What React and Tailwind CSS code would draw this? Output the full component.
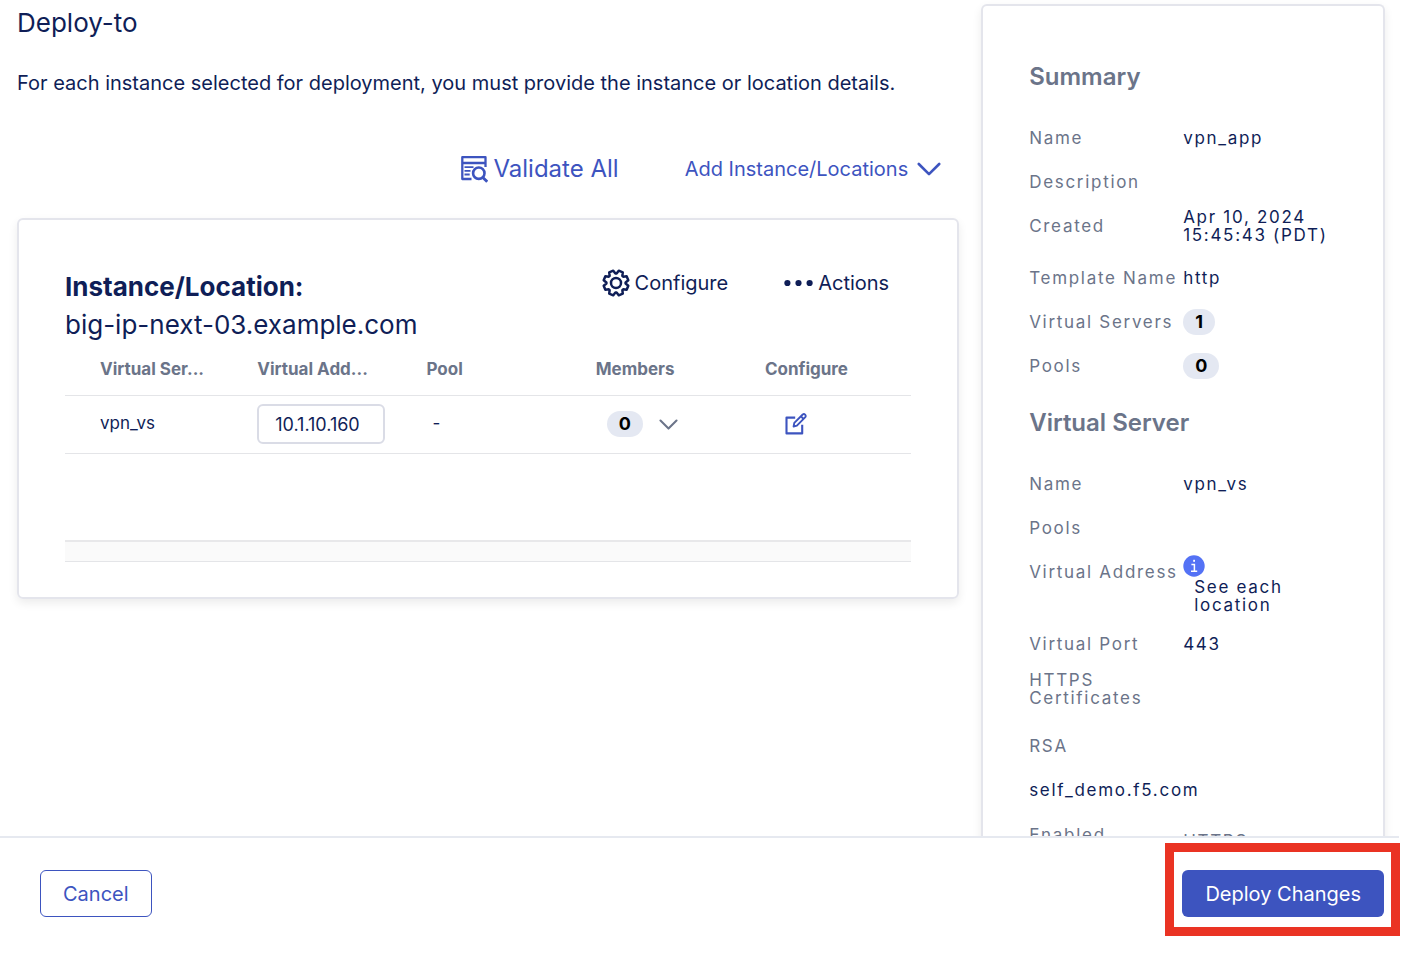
import React from "react";

const GEAR = (() => {
  const pts = [];
  for (let k = 0; k < 8; k++) {
    const c = 22.5 + k * 45;
    [[-19, 9.6], [-10, 12.6], [10, 12.6], [19, 9.6]].forEach(([d, r]) => {
      const a = ((c + d) * Math.PI) / 180;
      pts.push(`${(14 + r * Math.cos(a)).toFixed(2)} ${(14 + r * Math.sin(a)).toFixed(2)}`);
    });
  }
  return `M${pts.join("L")}Z`;
})();

function GearIcon() {
  return (
    <svg width="28" height="28" viewBox="0 0 28 28" fill="none" stroke="currentColor" strokeWidth="2.5" strokeLinejoin="round" aria-hidden="true">
      <path d={GEAR} />
      <circle cx="14" cy="14" r="5" />
    </svg>
  );
}

function ValidateIcon() {
  return (
    <svg width="28" height="28" viewBox="0 0 28 28" fill="none" stroke="currentColor" strokeWidth="2.3" strokeLinejoin="round" aria-hidden="true">
      <path d="M11.5 24H2.3V2.2h23.2V12M2.3 8h23.2" />
      <path d="M4.5 12.2h9M4.5 15.8h6M4.5 19.5h5.2" strokeWidth="1.8" />
      <circle cx="18.8" cy="18.2" r="5.7" strokeWidth="2.6" />
      <path d="M22.6 22.2l4.6 4.6" strokeWidth="2.8" />
    </svg>
  );
}

function Chevron({ className, strokeWidth }) {
  return (
    <svg className={className} viewBox="0 0 24 14" fill="none" stroke="currentColor" strokeWidth={strokeWidth} strokeLinecap="round" strokeLinejoin="round" aria-hidden="true">
      <path d="M1.8 2L12 12.2 22.2 2" />
    </svg>
  );
}

function DotsIcon() {
  return (
    <svg width="29" height="8" viewBox="0 0 29 8" fill="currentColor" aria-hidden="true">
      <circle cx="3.4" cy="4" r="3.1" />
      <circle cx="14.5" cy="4" r="3.1" />
      <circle cx="25.6" cy="4" r="3.1" />
    </svg>
  );
}

function EditIcon() {
  return (
    <svg width="22" height="22" viewBox="0 0 22 22" fill="none" stroke="currentColor" strokeWidth="2.1" strokeLinejoin="round" aria-hidden="true">
      <path d="M10.2 4.6H1.5v15.8h15.7v-8.6" />
      <path d="M8.6 13.5l.7-3.6 8.4-8.4q1.3-.9 2.4.2t.2 2.4l-8.4 8.6zM16 3.4l2.6 2.6" strokeWidth="1.9" />
    </svg>
  );
}

function InfoIcon() {
  return (
    <svg width="22" height="22" viewBox="0 0 22 22" aria-hidden="true">
      <circle cx="11" cy="11" r="10.7" fill="#5472f5" />
      <g fill="none" stroke="#fff" strokeWidth="1.5">
        <path d="M8.4 9.4h3v6.8M8 16.2h6.2" />
      </g>
      <rect x="10.2" y="4.8" width="1.8" height="2" fill="#fff" />
    </svg>
  );
}

function Pill({ children }) {
  return (
    <span className="inline-flex h-[26px] items-center rounded-full bg-[#e4e8f2] px-3 text-lg font-bold tracking-normal text-black">
      {children}
    </span>
  );
}

function Row({ label, children, className = "h-11" }) {
  return (
    <div className={`grid grid-cols-[154px_1fr] ${className}`}>
      <dt className="mt-[13px] whitespace-nowrap">{label}</dt>
      <dd className="text-[#0f1e57]">{children}</dd>
    </div>
  );
}

function Text({ children }) {
  return <span className="mt-[13px] block">{children}</span>;
}

export default function App() {
  return (
    <div className="flex h-screen flex-col overflow-hidden bg-white font-['Inter',sans-serif] text-[#0f1e57]">
      <div className="grid min-h-0 flex-1 grid-cols-[7fr_3fr] gap-[22px] overflow-hidden pl-[17px] pr-[27px]">
        <main>
          <h1 className="mt-1 text-[26px] leading-[38px]">Deploy-to</h1>
          <p className="mt-[26px] whitespace-nowrap text-xl leading-[30px]">
            For each instance selected for deployment, you must provide the instance or location details.
          </p>
          <div className="mt-[53px] flex h-9 items-center justify-end gap-[66px] pr-[18px] text-[#3d54bf]">
            <button type="button" className="flex items-center gap-[5px] text-2xl">
              <ValidateIcon />
              Validate All
            </button>
            <button type="button" className="flex items-center gap-[9px] text-xl">
              Add Instance/Locations
              <Chevron className="h-[14px] w-6" strokeWidth="2.6" />
            </button>
          </div>

          <section className="mt-[31px] rounded-md border-2 border-[#e4e5ec] px-[46px] pb-[35px] pt-12 shadow-[0_4px_10px_rgba(0,0,0,0.08)]">
            <div className="flex items-start justify-between pr-[22px]">
              <h2 className="text-[26px] leading-[38px]">
                <span className="block font-bold">Instance/Location:</span>
                <span className="block">big-ip-next-03.example.com</span>
              </h2>
              <div className="flex gap-14 pt-px text-xl">
                <button type="button" className="flex items-center gap-[5px]">
                  <GearIcon />
                  Configure
                </button>
                <button type="button" className="flex items-center gap-[5px]">
                  <DotsIcon />
                  Actions
                </button>
              </div>
            </div>

            <table className="w-full table-fixed text-left text-[17px]">
              <thead>
                <tr className="h-[51px] border-b border-[#e4e5e8] text-[#6b7489]">
                  <th className="pl-[35px] font-bold">Virtual Ser...</th>
                  <th className="pl-[23px] font-bold">Virtual Add...</th>
                  <th className="pl-[23px] font-bold">Pool</th>
                  <th className="pl-[23px] font-bold">Members</th>
                  <th className="pl-[23px] font-bold">Configure</th>
                </tr>
              </thead>
              <tbody>
                <tr className="h-[58px] border-b border-[#e4e5e8]">
                  <td className="pl-[35px]">vpn_vs</td>
                  <td className="pl-[23px]">
                    <input
                      aria-label="Virtual Address"
                      defaultValue="10.1.10.160"
                      className="block h-10 w-32 rounded-md border-2 border-[#dadce6] px-4 text-lg"
                    />
                  </td>
                  <td className="pl-[29px]">-</td>
                  <td className="pl-[34px]">
                    <div className="flex items-center gap-4">
                      <Pill>0</Pill>
                      <button type="button" aria-label="Show members" className="text-[#6b7489]">
                        <Chevron className="h-[11px] w-[19px]" strokeWidth="2.6" />
                      </button>
                    </div>
                  </td>
                  <td className="pl-[43px]">
                    <button type="button" aria-label="Edit virtual server" className="block text-[#3d54bf]">
                      <EditIcon />
                    </button>
                  </td>
                </tr>
              </tbody>
            </table>
            <div className="mt-[86px] h-[22px] border-b border-t-2 border-b-[#e4e5e8] border-t-[#e8e8ea] bg-[#fafafa]" />
          </section>
        </main>

        <aside className="mt-1 rounded-t-md border-2 border-b-0 border-[#e4e5ec] pl-[46px] text-[17px] leading-[18px] tracking-widest text-[#6b7489] shadow-[0_4px_10px_rgba(0,0,0,0.08)]">
          <h2 className="mb-6 mt-14 text-2xl font-semibold leading-[30px] tracking-normal">Summary</h2>
          <dl>
            <Row label="Name"><Text>vpn_app</Text></Row>
            <Row label="Description" />
            <Row label="Created" className="h-[52px]">
              <span className="mt-1 block">Apr 10, 2024<br />15:45:43 (PDT)</span>
            </Row>
            <Row label="Template Name"><Text>http</Text></Row>
            <Row label="Virtual Servers"><span className="mt-[9px] flex"><Pill>1</Pill></span></Row>
            <Row label="Pools"><span className="mt-[9px] flex"><Pill>0</Pill></span></Row>
          </dl>
          <h2 className="mb-6 mt-5 text-2xl font-semibold leading-[30px] tracking-normal">Virtual Server</h2>
          <dl>
            <Row label="Name"><Text>vpn_vs</Text></Row>
            <Row label="Pools" />
            <Row label="Virtual Address" className="h-[72px]">
              <span className="mt-[5px] block h-[23px]"><InfoIcon /></span>
              <span className="block pl-[11px]">See each<br />location</span>
            </Row>
            <Row label="Virtual Port"><Text>443</Text></Row>
            <div className="h-[58px] pt-[5px]">
              <dt>HTTPS<br />Certificates</dt>
            </div>
            <div className="pt-[13px]">
              <dt className="h-[31px]">RSA</dt>
              <dd className="mt-[13px] h-8 text-[#0f1e57]">self_demo.f5.com</dd>
            </div>
            <div className="grid grid-cols-[154px_1fr]">
              <dt className="mt-[13px]">Enabled</dt>
              <dd className="mt-[19px] text-[#6b7489]">HTTPS</dd>
            </div>
          </dl>
        </aside>
      </div>

      <footer className="mr-[13px] flex items-start justify-between border-t-2 border-[#e6e9f0] pb-[41px] pl-10 pr-[15px] pt-8 text-xl">
        <button type="button" className="h-[47px] rounded-md border border-[#3d54bf] px-[22px] text-[#3d54bf]">Cancel</button>
        <div className="relative">
          <button type="button" className="h-[47px] rounded-md bg-[#3d54bf] px-[23px] text-white">Deploy Changes</button>
          <div className="pointer-events-none absolute -bottom-[19px] -left-[17px] -right-4 -top-[27px] border-[9px] border-[#ea3323]" />
        </div>
      </footer>
    </div>
  );
}
